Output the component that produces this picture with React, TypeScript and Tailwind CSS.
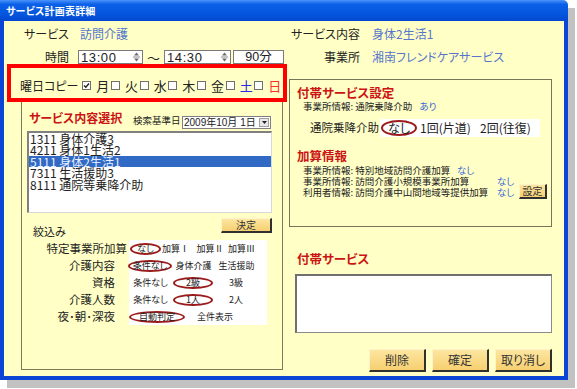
import React from "react";

function Spin() {
  return (
    <svg width="9" height="12" viewBox="0 0 9 12" className="shrink-0">
      <polygon points="2,4.5 4.5,1.5 7,4.5" fill="#6a6a6a" />
      <line x1="1" y1="6" x2="8" y2="6" stroke="#8a8a8a" strokeWidth="1" />
      <polygon points="2,7.5 4.5,10.5 7,7.5" fill="#6a6a6a" />
    </svg>
  );
}

function Box({ checked }: { checked?: boolean }) {
  return (
    <div className="w-[9px] h-[9px] border border-[#707070] bg-white shrink-0 flex items-center justify-center">
      {checked && (
        <svg width="7" height="7" viewBox="0 0 7 7">
          <path d="M1 3.5 L2.8 5.3 L6 1.5" stroke="#222" strokeWidth="1.4" fill="none" />
        </svg>
      )}
    </div>
  );
}

function Opt({
  className,
  circled,
  children,
}: {
  className: string;
  circled?: boolean;
  children: React.ReactNode;
}) {
  return (
    <div
      className={
        (circled
          ? "h-[12px] rounded-[50%] border-2 border-[#9b1b1b] "
          : "h-[12px] ") +
        "shrink-0 flex items-center justify-center whitespace-nowrap leading-none " +
        className
      }
    >
      {children}
    </div>
  );
}

const days = [
  { t: "月", c: true, col: "text-[#222]" },
  { t: "火", c: false, col: "text-[#222]" },
  { t: "水", c: false, col: "text-[#222]" },
  { t: "木", c: false, col: "text-[#222]" },
  { t: "金", c: false, col: "text-[#222]" },
  { t: "土", c: false, col: "text-[#2a2ae0]" },
  { t: "日", c: false, col: "text-[#ff2a2a]" },
];

const items = [
  "1311 身体介護3",
  "4211 身体1生活2",
  "5111 身体2生活1",
  "7311 生活援助3",
  "8111 通院等乗降介助",
];

const goldBtn =
  "bg-[linear-gradient(#fde6a0,#f6cf70)] border-t border-l border-t-[#fff3cc] border-l-[#fff3cc] border-r-2 border-b-2 border-r-[#303030] border-b-[#303030] text-[#333] flex items-center justify-center leading-none";

export default function App() {
  return (
    <div className="w-[577px] h-[389px] bg-white font-['Noto_Sans_CJK_JP','Noto_Sans',sans-serif] [font-feature-settings:'palt'] text-[#222] overflow-hidden">
      <div className="w-[568px] h-[380px] flex flex-col shadow-[7px_8px_0_#c2c2c2]">
        {/* title bar */}
        <div className="h-[21px] shrink-0 bg-[linear-gradient(180deg,#4a94fa,#0b60e8_20%,#0656de_65%,#0448d0)] flex items-center pl-[6px] rounded-tr-[5px]">
          <span className="text-white text-[10px] font-bold leading-none tracking-[0.2px]">
            サービス計画表詳細
          </span>
        </div>

        {/* body */}
        <div className="flex-1 flex bg-[#ffffc6] border-l-4 border-r-4 border-b-4 border-[#0a45d6] pl-[3px]">
          {/* left column */}
          <div className="w-[280px] flex flex-col">
            <div className="mt-[4px] h-[18px] flex items-center text-[12px]">
              <span className="w-[62px] text-right">サービス</span>
              <span className="ml-[11px] text-[#5576cc]">訪問介護</span>
            </div>
            <div className="mt-[7px] h-[14px] flex items-center text-[12px]">
              <span className="w-[62px] text-right">時間</span>
              <div className="ml-[9px] w-[65px] h-[14px] bg-white border border-[#7a7a7a] flex items-center justify-between pl-[2px] pr-[1px]">
                <span className="font-['Liberation_Sans',sans-serif] text-[13px] leading-none tracking-[0.6px]">13:00</span>
                <Spin />
              </div>
              <span className="w-[21px] text-center text-[13px] leading-none">～</span>
              <div className="w-[67px] h-[14px] bg-white border border-[#7a7a7a] flex items-center justify-between pl-[2px] pr-[1px]">
                <span className="font-['Liberation_Sans',sans-serif] text-[13px] leading-none tracking-[0.6px]">14:30</span>
                <Spin />
              </div>
              <div className="ml-[2px] w-[51px] h-[14px] bg-white border border-[#7a7a7a] flex items-center justify-center text-[12.5px] leading-none">
                <span className="font-['Liberation_Sans','Noto_Sans_CJK_JP',sans-serif]">90分</span>
              </div>
            </div>

            {/* red box */}
            <div className="h-[38px] border-4 border-[#ff0000] flex items-center pt-[5px] pl-[9px] text-[12px]">
              <span className="w-[63px] leading-none">曜日コピー</span>
              {days.map((d) => (
                <div key={d.t} className="w-[29px] flex items-center">
                  <Box checked={d.c} />
                  <span className={"ml-[5px] text-[13px] leading-none " + d.col}>{d.t}</span>
                </div>
              ))}
            </div>

            {/* group box */}
            <div className="ml-[14px] w-[262px] h-[268px] border border-t-0 border-[#7b7b5c] flex flex-col">
              <div className="mt-[9px] h-[19px] flex items-end">
                <span className="ml-[7px] w-[104px] mb-[5px] text-[12px] leading-[14px] font-bold text-[#cc1414]">
                  サービス内容選択
                </span>
                <span className="w-[49px] mb-[4px] text-[9.5px] leading-[12px]">検索基準日</span>
                <div className="w-[89px] h-[13px] mb-[1px] bg-white border border-[#7f7f7f] flex items-center justify-between pl-[1px]">
                  <span className="text-[10px] leading-none font-['Liberation_Sans','Noto_Sans_CJK_JP',sans-serif]">2009年10月 1日</span>
                  <div className="w-[10px] h-[9px] mr-[1px] bg-[#e8e8e8] border border-[#a0a0a0] flex items-center justify-center">
                    <svg width="5" height="3" viewBox="0 0 5 3">
                      <polygon points="0,0 5,0 2.5,3" fill="#222" />
                    </svg>
                  </div>
                </div>
              </div>

              <div className="ml-[5px] mt-[1px] w-[245px] h-[82px] bg-white border-t-2 border-l-2 border-t-[#808080] border-l-[#808080] border-r border-b border-r-[#d8d8d8] border-b-[#d8d8d8] text-[12px] leading-[11.4px]">
                {items.map((it, i) => (
                  <div
                    key={it}
                    className={
                      i === 2
                        ? "h-[11.4px] pl-[1px] bg-[#316ac5] text-[#e8f0ff] whitespace-nowrap"
                        : "h-[11.4px] pl-[1px] whitespace-nowrap"
                    }
                  >
                    {it}
                  </div>
                ))}
              </div>

              <div className="mt-[5px] h-[15px] flex">
                <span className="ml-[11px] mt-[7px] text-[11px] leading-[12px]">絞込み</span>
                <div className={"ml-auto mr-[10px] w-[51px] h-[15px] text-[10px] " + goldBtn}>決定</div>
              </div>

              <div className="mt-[7px] flex">
                <div className="w-[107px] flex flex-col text-[11.5px] leading-none">
                  <div className="h-[17px] flex items-center justify-end pr-[2px] whitespace-nowrap">特定事業所加算</div>
                  <div className="h-[17px] flex items-center justify-end pr-[14px]">介護内容</div>
                  <div className="h-[17px] flex items-center justify-end pr-[14px]">資格</div>
                  <div className="h-[17px] flex items-center justify-end pr-[14px]">介護人数</div>
                  <div className="h-[17px] flex items-center justify-end pr-[14px]">夜･朝･深夜</div>
                </div>
                <div className="w-[138px] bg-white flex flex-col text-[9px]">
                  <div className="h-[17px] flex items-center">
                    <Opt circled className="ml-[1px] w-[31px]">なし</Opt>
                    <Opt className="ml-[2px] w-[25px]">加算Ⅰ</Opt>
                    <Opt className="ml-[9px] w-[26px]">加算Ⅱ</Opt>
                    <Opt className="ml-[5px] w-[27px]">加算Ⅲ</Opt>
                  </div>
                  <div className="h-[17px] flex items-center">
                    <Opt circled className="-ml-[1px] w-[44px]">条件なし</Opt>
                    <Opt className="ml-[4px] w-[35px]">身体介護</Opt>
                    <Opt className="ml-[8px] w-[35px]">生活援助</Opt>
                  </div>
                  <div className="h-[17px] flex items-center">
                    <Opt className="ml-[6px] w-[31px]">条件なし</Opt>
                    <Opt circled className="ml-[7px] w-[40px]">2級</Opt>
                    <Opt className="ml-[16px] w-[14px]">3級</Opt>
                  </div>
                  <div className="h-[17px] flex items-center">
                    <Opt className="ml-[6px] w-[31px]">条件なし</Opt>
                    <Opt circled className="ml-[7px] w-[40px]">1人</Opt>
                    <Opt className="ml-[16px] w-[14px]">2人</Opt>
                  </div>
                  <div className="h-[17px] flex items-center">
                    <Opt circled className="ml-0 w-[56px]">自動判定</Opt>
                    <Opt className="ml-[13px] w-[34px]">全件表示</Opt>
                  </div>
                </div>
              </div>
            </div>
          </div>

          {/* right column */}
          <div className="ml-[2px] w-[263px] flex flex-col">
            <div className="mt-[4px] h-[18px] flex items-center text-[12px]">
              <span className="w-[71px] text-right whitespace-nowrap">サービス内容</span>
              <span className="ml-[12px] text-[#5576cc]">身体2生活1</span>
            </div>
            <div className="mt-[7px] h-[14px] flex items-center text-[12px]">
              <span className="w-[71px] text-right">事業所</span>
              <span className="ml-[12px] text-[#5576cc] whitespace-nowrap">湘南フレンドケアサービス</span>
            </div>

            <div className="mt-[15px] h-[148px] border border-[#76765a] flex flex-col">
              <span className="ml-[7px] mt-[6px] text-[12.5px] leading-[14px] font-bold text-[#cc1414]">
                付帯サービス設定
              </span>
              <div className="ml-[13px] mt-[1px] text-[9.5px] leading-[11px] whitespace-nowrap">
                事業所情報: 通院乗降介助<span className="ml-[7px] text-[#3a66d8]">あり</span>
              </div>
              <div className="mt-[7px] h-[18px] flex items-center">
                <span className="ml-[20px] w-[70px] text-[11.5px] leading-none whitespace-nowrap">通院乗降介助</span>
                <div className="w-[160px] h-[18px] bg-white flex items-center text-[12px] leading-none">
                  <div className="ml-[1px] w-[36px] h-[16px] rounded-[50%] border-2 border-[#9b1b1b] flex items-center justify-center">
                    なし
                  </div>
                  <span className="ml-[3px] w-[52px] whitespace-nowrap">1回(片道)</span>
                  <span className="ml-[8px] w-[53px] whitespace-nowrap">2回(往復)</span>
                </div>
              </div>
              <span className="ml-[7px] mt-[12px] text-[12.5px] leading-[14px] font-bold text-[#cc1414]">加算情報</span>
              <div className="mt-[2px] flex items-end">
                <div className="ml-[13px] w-[216px] flex flex-col text-[9.5px] leading-[11px] whitespace-nowrap">
                  <div className="flex">
                    <span className="w-[154px]">事業所情報: 特別地域訪問介護加算</span>
                    <span className="text-[#3a66d8]">なし</span>
                  </div>
                  <div className="flex">
                    <span className="w-[194px]">事業所情報: 訪問介護小規模事業所加算</span>
                    <span className="text-[#3a66d8]">なし</span>
                  </div>
                  <div className="flex">
                    <span className="w-[194px]">利用者情報: 訪問介護中山間地域等提供加算</span>
                    <span className="text-[#3a66d8]">なし</span>
                  </div>
                </div>
                <div className={"w-[28px] h-[15px] mb-[-1px] text-[10px] " + goldBtn}>設定</div>
              </div>
            </div>

            <span className="ml-[8px] mt-[25px] text-[12.5px] leading-[14px] font-bold text-[#cc1414]">付帯サービス</span>
            <div className="ml-[6px] mt-[8px] w-[257px] h-[59px] bg-white border border-[#8a8a8a] border-t-2 border-l-2 border-t-[#707070] border-l-[#707070]" />
            <div className="mt-[16px] flex justify-end gap-[6px]">
              <div className={"w-[57px] h-[23px] text-[12px] " + goldBtn}>削除</div>
              <div className={"w-[57px] h-[23px] text-[12px] " + goldBtn}>確定</div>
              <div className={"w-[57px] h-[23px] text-[12px] " + goldBtn}>取り消し</div>
            </div>
          </div>
        </div>
      </div>
    </div>
  );
}
